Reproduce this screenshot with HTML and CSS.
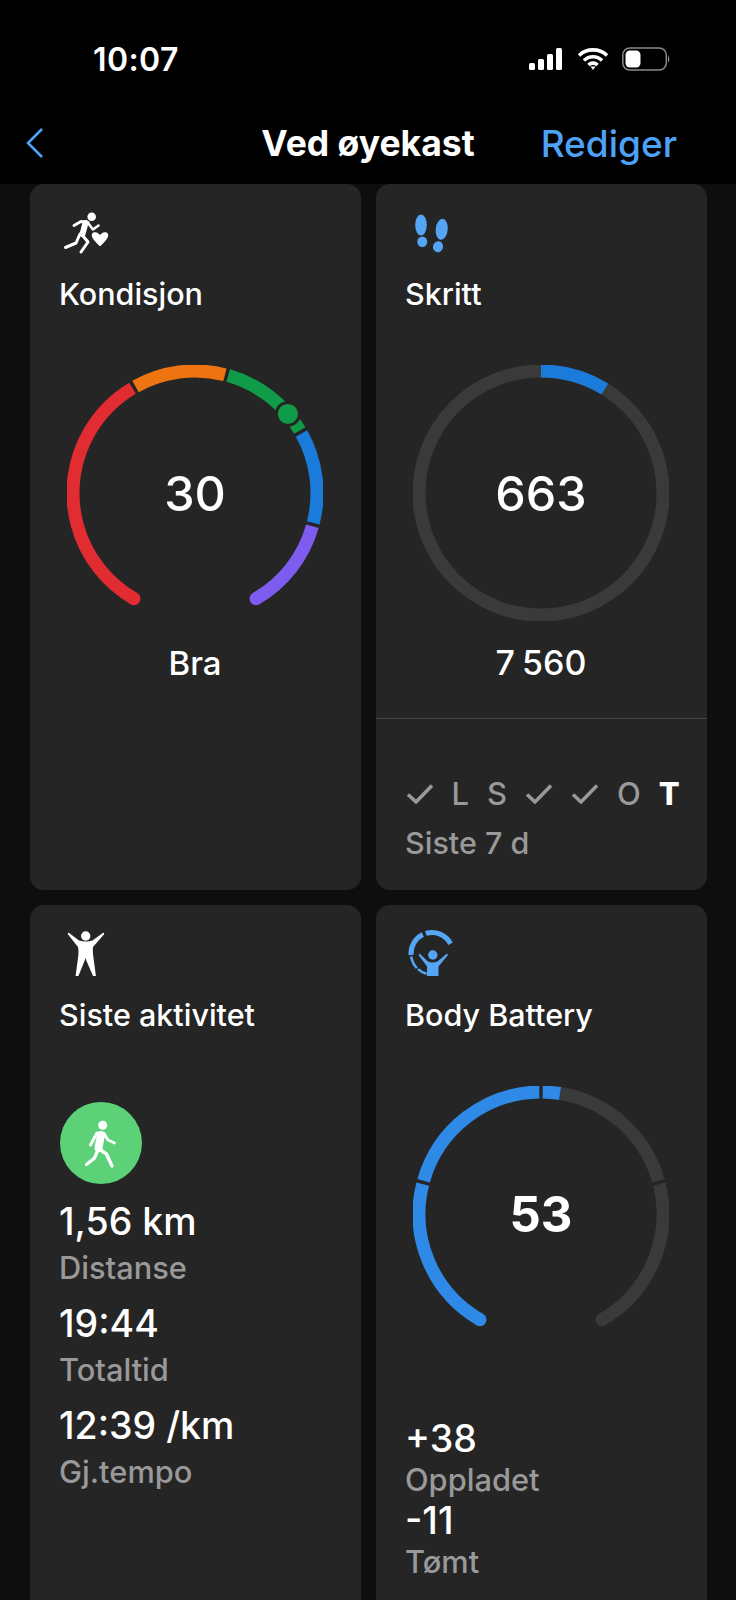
FILE: index.html
```html
<!DOCTYPE html>
<html lang="en">
<head>
    <meta charset="UTF-8">
    <meta name="viewport" content="width=device-width, initial-scale=1.0">
    <title>Ved øyekast</title>
    <link rel="stylesheet" href="styles.css">
</head>
<body>
    <header class="top">
        <div class="status">
            <span class="clock">10:07</span>
            <div class="status-icons">
                <svg width="36" height="24" viewBox="0 0 36 24" fill="#fff">
                    <rect x="1" y="16" width="6" height="7" rx="1.5"/>
                    <rect x="10" y="12" width="6" height="11" rx="1.5"/>
                    <rect x="19" y="7" width="6" height="16" rx="1.5"/>
                    <rect x="28" y="1" width="6" height="22" rx="1.5"/>
                </svg>
                <svg width="30" height="24" viewBox="1 0 30 24" fill="none" stroke="#fff" stroke-width="3.6">
                    <path d="M2 8.5C9.5 1 22.500 1 30 8.500"/>
                    <path d="M7 13.500C12 8.500 20 8.500 25 13.500"/>
                    <path d="M11.500 18C14 15.500 18 15.500 20.500 18"/>
                    <path d="M13.500 19.500L16 23L18.500 19.500Z" fill="#fff" stroke="none"/>
                </svg>
                <svg width="49" height="24" viewBox="0 0 49 24" fill="none">
                    <rect x="0.800" y="1" width="43.500" height="22" rx="7" stroke="#8a8a8a" stroke-width="1.500"/>
                    <rect x="3.500" y="3.500" width="15" height="17" rx="4.500" fill="#fff"/>
                    <path d="M46 8.500C47.800 9.500 47.800 14.500 46 15.500Z" fill="#8a8a8a"/>
                </svg>
            </div>
        </div>
        <nav class="nav">
            <svg class="back" width="19" height="32" viewBox="0 0 19 32" fill="none" stroke="#4da2f5" stroke-width="2.600">
                <path d="M17 2L3 16L17 30"/>
            </svg>
            <h1 class="nav-title">Ved øyekast</h1>
            <a class="nav-edit">Rediger</a>
        </nav>
    </header>

    <main class="grid">
        <!-- Kondisjon -->
        <section class="card card-short">
            <svg class="card-icon" viewBox="10 5 60 50" fill="none" stroke="#fff" stroke-linecap="round" stroke-linejoin="round">
                <circle cx="41.700" cy="16.700" r="4.300" fill="#fff" stroke="none"/>
                <path d="M24 25.500L31 21.500L38 22.500" stroke-width="3"/>
                <path d="M35.500 23L32.500 34" stroke-width="6"/>
                <path d="M38 23L43 29.500L48.500 25.500" stroke-width="2.600"/>
                <path d="M30 34L26 43L15.500 47.500" stroke-width="3"/>
                <path d="M33 36L38 42L31 52" stroke-width="3"/>
                <path d="M50 47.500C44 42 41 39 41 35.500C41 31 47 30 50 34C53 30 59 31 59 35.500C59 39 56 42 50 47.500Z" fill="#fff" stroke="#252525" stroke-width="1.500"/>
            </svg>
            <h2 class="card-title">Kondisjon</h2>
            <div class="gauge">
                <svg class="gauge-ring" viewBox="-128 -128 256 256">
                    <circle class="seg seg-red" r="122" pathLength="360" stroke-dasharray="119.200 360" transform="rotate(-240)"/>
                    <circle class="seg seg-orange" r="122" pathLength="360" stroke-dasharray="43.400 360" transform="rotate(-119.200)"/>
                    <circle class="seg seg-green" r="122" pathLength="360" stroke-dasharray="43.400 360" transform="rotate(-74.200)"/>
                    <circle class="seg seg-blue" r="122" pathLength="360" stroke-dasharray="43.400 360" transform="rotate(-29.200)"/>
                    <circle class="seg seg-purple" r="122" pathLength="360" stroke-dasharray="44.200 360" transform="rotate(15.800)"/>
                    <circle class="cap-red" cx="-61" cy="105.700" r="6.500"/>
                    <circle class="cap-purple" cx="61" cy="105.700" r="6.500"/>
                    <circle class="marker" cx="92.900" cy="-79.100" r="11.500"/>
                </svg>
                <span class="gauge-value">30</span>
            </div>
            <p class="gauge-label">Bra</p>
        </section>

        <!-- Skritt -->
        <section class="card card-short">
            <svg class="card-icon" viewBox="7 5 60 50" fill="#55a5f5">
                <ellipse cx="22" cy="25" rx="5.800" ry="10.500"/>
                <ellipse cx="23.300" cy="41.700" rx="5" ry="5.200"/>
                <ellipse cx="42.700" cy="29.300" rx="6" ry="10.500" transform="rotate(6 42.700 29.300)"/>
                <ellipse cx="39" cy="46.700" rx="5" ry="5.600" transform="rotate(15 39 46.700)"/>
            </svg>
            <h2 class="card-title">Skritt</h2>
            <div class="gauge">
                <svg class="gauge-ring" viewBox="-128 -128 256 256">
                    <circle class="seg seg-track" r="122"/>
                    <circle class="seg seg-blue" r="122" pathLength="360" stroke-dasharray="31.600 360" transform="rotate(-90)"/>
                </svg>
                <span class="gauge-value">663</span>
            </div>
            <p class="gauge-label gauge-label-steps">7 560</p>
            <div class="divider"></div>
            <div class="week">
                <svg class="tick" viewBox="0 0 27 21"><path d="M1.500 11.500L9.500 19L25.500 2.500"/></svg>
                <span>L</span>
                <span>S</span>
                <svg class="tick" viewBox="0 0 27 21"><path d="M1.500 11.500L9.500 19L25.500 2.500"/></svg>
                <svg class="tick" viewBox="0 0 27 21"><path d="M1.500 11.500L9.500 19L25.500 2.500"/></svg>
                <span>O</span>
                <span class="today">T</span>
            </div>
            <p class="muted week-label">Siste 7 d</p>
        </section>

        <!-- Siste aktivitet -->
        <section class="card">
            <svg class="card-icon" viewBox="10 6 60 50" fill="#fff">
                <circle cx="35.700" cy="16" r="4.700"/>
                <path d="M18.500 12.500L29 20.500Q36 22.500 42.500 20.500L53.500 12.500L54.300 14L43 27Q42.500 32 43.500 38L46 56.500L43.500 57L36.500 41L35.700 38L34.500 41L28 57L25.500 56.500L28 38Q29 32 28 27L17.700 14Z"/>
            </svg>
            <h2 class="card-title">Siste aktivitet</h2>
            <div class="activity-badge">
                <svg width="82" height="82" viewBox="0 0 82 82" fill="none" stroke="#fff" stroke-linecap="round" stroke-linejoin="round">
                    <circle cx="42.700" cy="23.200" r="4.500" fill="#fff" stroke="none"/>
                    <path d="M37 31L30.500 43" stroke-width="3"/>
                    <path d="M44 31.500L48 38L54.500 41" stroke-width="2.800"/>
                    <path d="M41 33L38.500 46" stroke-width="8"/>
                    <path d="M37.500 49L34.500 56L26.500 62.500" stroke-width="3.200"/>
                    <path d="M40.500 48L46.500 52L52 64" stroke-width="3.400"/>
                </svg>
            </div>
            <div class="stat"><p class="stat-value">1,56 km</p><p class="muted stat-label">Distanse</p></div>
            <div class="stat"><p class="stat-value">19:44</p><p class="muted stat-label">Totaltid</p></div>
            <div class="stat"><p class="stat-value">12:39 /km</p><p class="muted stat-label">Gj.tempo</p></div>
        </section>

        <!-- Body Battery -->
        <section class="card">
            <svg class="card-icon" viewBox="7 6 60 50" fill="none" stroke="#55a5f5">
                <g transform="translate(33 33.500)">
                    <circle r="21" stroke-width="5" pathLength="360" stroke-dasharray="79 360" transform="rotate(-107)"/>
                    <circle r="21" stroke-width="5" pathLength="360" stroke-dasharray="68 360" transform="rotate(-184)"/>
                    <circle r="21" stroke-width="2.500" pathLength="360" stroke-dasharray="36 360" transform="rotate(-224)"/>
                    <circle r="21" stroke-width="2.500" pathLength="360" stroke-dasharray="27 360" transform="rotate(-255)"/>
                </g>
                <circle cx="33.800" cy="35" r="4.700" fill="#55a5f5" stroke="none"/>
                <path d="M20.500 33.500L29 41.500Q33.800 43.500 38.500 41.500L48 33.500L49 35L39.500 46.500L39.500 56Q39.500 57.500 38 57.500L29.500 57.500Q28 57.500 28 56L28 46.500L19.500 35Z" fill="#55a5f5" stroke="none"/>
            </svg>
            <h2 class="card-title">Body Battery</h2>
            <div class="gauge">
                <svg class="gauge-ring" viewBox="-128 -128 256 256">
                    <circle class="seg seg-track" r="122" pathLength="360" stroke-dasharray="65.200 360" transform="rotate(-81)"/>
                    <circle class="seg seg-track" r="122" pathLength="360" stroke-dasharray="74.200 360" transform="rotate(-14.200)"/>
                    <circle class="seg seg-battery" r="122" pathLength="360" stroke-dasharray="74.200 360" transform="rotate(-240)"/>
                    <circle class="seg seg-battery" r="122" pathLength="360" stroke-dasharray="73.400 360" transform="rotate(-164.200)"/>
                    <circle class="seg seg-battery" r="122" pathLength="360" stroke-dasharray="8.200 360" transform="rotate(-89.200)"/>
                    <circle class="cap-battery" cx="-61" cy="105.700" r="6.500"/>
                    <circle class="cap-track" cx="61" cy="105.700" r="6.500"/>
                </svg>
                <span class="gauge-value gauge-value-bold">53</span>
            </div>
            <div class="charge">
                <p class="stat-value">+38</p>
                <p class="muted">Oppladet</p>
                <p class="stat-value">-11</p>
                <p class="muted">Tømt</p>
            </div>
        </section>
    </main>
</body>
</html>
```

FILE: styles.css
```css
* {
    box-sizing: border-box;
}
html, body {
    height: 100%;
}
body {
    margin: 0;
    height: 1600px;
    overflow: hidden;
    display: flex;
    flex-direction: column;
    background-color: #0e0e0e;
    color: #fff;
    font-family: Inter, "Liberation Sans", sans-serif;
    font-weight: 500;
}
p, h1, h2 {
    margin: 0;
    font-weight: inherit;
}

/* top bars */
.top {
    height: 184px;
    flex-shrink: 0;
    background-color: #000;
}
.status {
    display: flex;
    justify-content: space-between;
    align-items: center;
    height: 60px;
    margin-top: 29px;
    padding: 0 65px 0 93px;
}
.clock {
    font-size: 32px;
    font-weight: 600;
    letter-spacing: 0.4px;
}
.status-icons {
    display: flex;
    align-items: center;
    gap: 14px;
}
.nav {
    display: grid;
    grid-template-columns: 1fr auto 1fr;
    align-items: center;
    height: 46px;
    margin-top: 31px;
    padding: 0 59px;
}
.back {
    margin-left: -34px;
}
.nav-title {
    font-size: 35.500px;
    font-weight: 700;
}
.nav-edit {
    justify-self: end;
    font-size: 37px;
    font-weight: 500;
    color: #4da2f5;
}

/* cards */
.grid {
    display: grid;
    grid-template-columns: 331px 331px;
    grid-template-rows: 706px 740px;
    gap: 15px;
    padding-left: 29.500px;
}
.card {
    padding-top: 21px;
    background-color: #252525;
    border-radius: 14px;
}
.card-icon {
    display: block;
    width: 60px;
    height: 50px;
    margin-left: 30px;
}
.card-title {
    margin: 19px 0 0 29.500px;
    font-size: 30.500px;
    line-height: 40px;
}
.muted {
    color: #999;
    font-size: 30.800px;
}

/* gauges */
.gauge {
    display: grid;
    place-items: center;
    width: 256px;
    height: 256px;
    margin: 51px auto 0;
}
.gauge-ring, .gauge-value {
    grid-area: 1 / 1;
}
.gauge-ring {
    width: 256px;
    height: 256px;
}
.gauge-value {
    font-size: 48.500px;
}
.gauge-value-bold {
    font-size: 49px;
    font-weight: 700;
}
.seg {
    fill: none;
    stroke-width: 13;
}
.seg-red { stroke: #e12c32; }
.seg-orange { stroke: #ee7411; }
.seg-green { stroke: #0f9b48; }
.seg-blue { stroke: #1b7bdb; }
.seg-purple { stroke: #7f5cf0; }
.seg-track { stroke: #3a3a3a; }
.seg-battery { stroke: #2e8ae6; }
.cap-red { fill: #e12c32; }
.cap-purple { fill: #7f5cf0; }
.cap-battery { fill: #2e8ae6; }
.cap-track { fill: #3a3a3a; }
.marker {
    fill: #0f9b48;
    stroke: #252525;
    stroke-width: 3;
}
.gauge-label {
    margin-top: 22px;
    font-size: 33px;
    line-height: 40px;
    text-align: center;
}
.gauge-label-steps {
    font-size: 34px;
    word-spacing: -2px;
}

/* Skritt footer */
.divider {
    height: 1px;
    margin-top: 35px;
    background-color: #444;
}
.week {
    display: flex;
    align-items: center;
    gap: 18px;
    height: 30px;
    margin: 59px 0 0 30px;
    color: #999;
    font-size: 31px;
}
.tick {
    width: 28px;
    height: 21px;
    fill: none;
    stroke: #999;
    stroke-width: 3.500;
}
.today {
    color: #fff;
    font-weight: 800;
}
.week-label {
    margin: 15px 0 0 29.500px;
    font-size: 30.500px;
    line-height: 40px;
}

/* Siste aktivitet */
.activity-badge {
    width: 82px;
    height: 82px;
    margin: 67px 0 15px 30px;
    background-color: #5dd178;
    border-radius: 50%;
}
.stat {
    margin: 0 0 10px 29.500px;
}
.stat-value {
    font-size: 37.500px;
    line-height: 46px;
}
.stat-label {
    line-height: 46px;
}

/* Body Battery */
.charge {
    margin: 76px 0 0 29.500px;
    line-height: 41px;
}
.charge .stat-value {
    line-height: 41px;
}
```
